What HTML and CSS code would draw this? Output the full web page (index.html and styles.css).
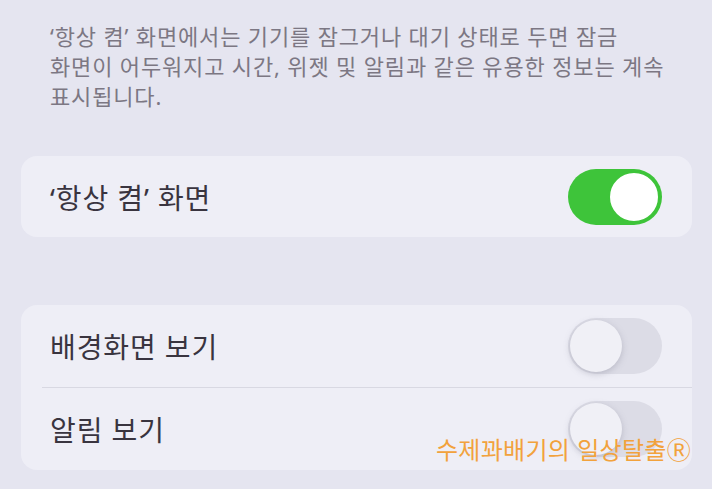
FILE: index.html
```html
<!DOCTYPE html>
<html lang="ko">
<head>
<meta charset="utf-8">
<link rel="stylesheet" href="styles.css">
</head>
<body>
<div class="page">
  <p class="desc">‘항상 켬’ 화면에서는 기기를 잠그거나 대기 상태로 두면 잠금<br>화면이 어두워지고 시간, 위젯 및 알림과 같은 유용한 정보는 계속<br>표시됩니다.</p>
  <div class="card card-one">
    <div class="row">
      <span class="label">‘항상 켬’ 화면</span>
      <span class="toggle on"><span class="knob"></span></span>
    </div>
  </div>
  <div class="card card-two">
    <div class="row">
      <span class="label">배경화면 보기</span>
      <span class="toggle"><span class="knob"></span></span>
    </div>
    <div class="divider"></div>
    <div class="row">
      <span class="label">알림 보기</span>
      <span class="toggle"><span class="knob"></span></span>
    </div>
  </div>
  <div class="watermark">수제꽈배기의 일상탈출Ⓡ</div>
</div>
</body>
</html>
```
FILE: styles.css
```css
html, body {
  margin: 0;
  padding: 0;
}
body {
  width: 712px;
  height: 489px;
  overflow: hidden;
  background: #e5e5f0;
  font-family: "Noto Sans", "Noto Sans CJK KR", sans-serif;
}
.page {
  position: relative;
  height: 489px;
  padding: 21px 20px 0 21px;
  box-sizing: border-box;
}
.desc {
  margin: 0 0 0 29px;
  font-size: 22px;
  line-height: 30px;
  color: #7c7783;
  letter-spacing: 0.85px;
}
.card {
  background: #eeeef6;
  border-radius: 16px;
  padding: 0 30px 0 29px;
}
.card-one {
  margin-top: 45px;
}
.card-two {
  margin-top: 68px;
}
.row {
  display: flex;
  align-items: center;
  justify-content: space-between;
  height: 81px;
}
.card-two .row {
  height: 82px;
}
.label {
  font-family: "Noto Sans", "Noto Sans CJK KR", sans-serif;
  font-size: 28px;
  color: #39343f;
  letter-spacing: 0.9px;
}
.divider {
  height: 1px;
  background: #d8d8e2;
  margin-left: -8px;
  margin-right: -30px;
}
.toggle {
  position: relative;
  width: 94px;
  height: 56px;
  border-radius: 28px;
  background: #dcdce6;
  box-sizing: border-box;
  display: flex;
  align-items: center;
  padding: 0 2px;
}
.toggle .knob {
  width: 52px;
  height: 52px;
  border-radius: 50%;
  background: #f0f0f6;
  box-shadow: 0 2px 6px rgba(120, 120, 140, 0.35);
}
.toggle.on {
  background: #3ec43a;
  justify-content: flex-end;
}
.toggle.on .knob {
  background: #ffffff;
  box-shadow: none;
  border: 2px solid #3ec43a;
  box-sizing: border-box;
}
.watermark {
  position: absolute;
  right: 21px;
  top: 434px;
  font-family: "Noto Sans CJK KR", sans-serif;
  font-size: 24px;
  line-height: 30px;
  color: #f2a23c;
  letter-spacing: 0.3px;
}
```
